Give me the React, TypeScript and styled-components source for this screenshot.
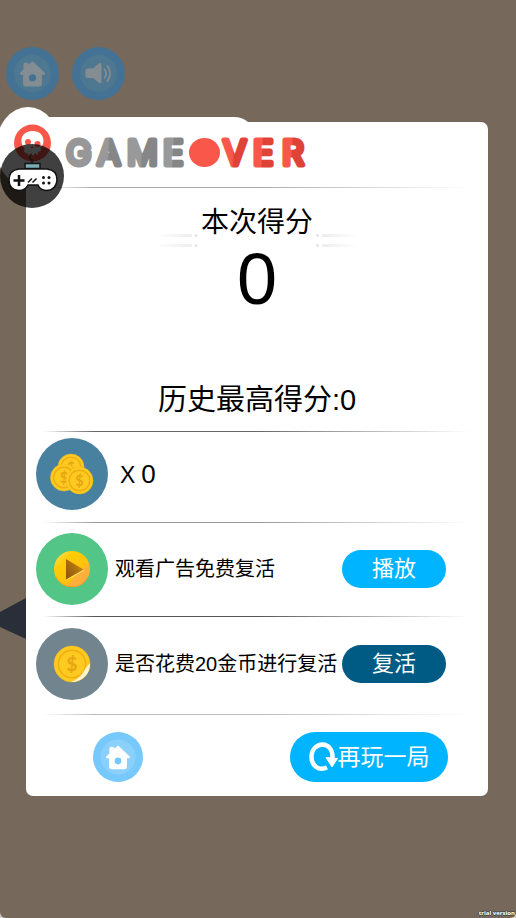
import React from 'react';
import styled, { createGlobalStyle } from 'styled-components';

const Global = createGlobalStyle`
  * { box-sizing: border-box; }
  html { background: #cfccc8; }
  body {
    margin: 0;
    font-family: "Liberation Sans", "Noto Sans CJK SC", sans-serif;
    color: #000;
  }
  button { font: inherit; border: 0; padding: 0; cursor: pointer; background: none; }
  svg { display: block; }
`;

const Page = styled.div`
  position: relative;
  min-height: 100vh;
  background: #76685a;
  border-radius: 0 0 6px 6px;
  overflow: hidden;
`;

const Toolbar = styled.nav`
  display: flex;
  gap: 13px;
  padding: 47px 6px 22px;
`;

const IconButton = styled.button<{ $size: number }>`
  width: ${(p) => p.$size}px;
  height: ${(p) => p.$size}px;
  border-radius: 50%;
  flex: none;
`;

const Card = styled.main`
  position: relative;
  margin: 0 28px 40px 26px;
  background: #fff;
  border-radius: 7px;
`;

const Crest = styled.svg`
  position: absolute;
  left: -26px;
  top: -15px;
`;

const FloatingPad = styled.button`
  position: absolute;
  left: -26px;
  top: 22px;
  width: 64px;
  height: 64px;
  border-radius: 50%;
`;

const Header = styled.header`
  height: 65px;
  padding: 2px 0 0 38px;
`;

const Wordmark = styled.h1`
  position: relative;
  margin: 0;
`;

const Divider = styled.hr<{ $tone: string }>`
  height: 1px;
  margin: 0 18px 0 17px;
  border: 0;
  background: linear-gradient(90deg, transparent, ${(p) => p.$tone} 12%, ${(p) => p.$tone} 50%, transparent);
`;

const Score = styled.section`
  display: flex;
  flex-direction: column;
  align-items: center;
  height: 243px;
  padding-top: 14px;
`;

const ScoreTitle = styled.div`
  display: flex;
  align-items: flex-end;
  gap: 3px;
  height: 45px;
`;

const Heading = styled.h2`
  margin: 0;
  align-self: flex-start;
  font-size: 28px;
  font-weight: 400;
  line-height: 42px;
`;

const BigNumber = styled.output`
  font-size: 72px;
  line-height: 64px;
`;

const Best = styled.p`
  margin: 69px 0 0;
  font-size: 29px;
  line-height: 40px;
`;

const Row = styled.section<{ $top: number; $bottom: number }>`
  display: flex;
  align-items: center;
  padding: ${(p) => `${p.$top}px 42px ${p.$bottom}px 10px`};
`;

const RowText = styled.p`
  flex: 1;
  margin: 0 0 0 7px;
  font-size: 20px;
  line-height: 32px;
  white-space: nowrap;
`;

const CoinCount = styled.p`
  display: flex;
  align-items: baseline;
  gap: 6px;
  margin: 0 0 0 12px;
  font-size: 26px;
  line-height: 30px;
`;

const Times = styled.span`
  font-size: 23px;
`;

const ActionButton = styled.button<{ $tone: string }>`
  flex: none;
  width: 104px;
  height: 38px;
  border-radius: 19px;
  background: ${(p) => p.$tone};
  color: #fff;
  font-size: 22px;
  line-height: 38px;
`;

const Footer = styled.footer`
  display: flex;
  justify-content: space-between;
  align-items: center;
  padding: 17px 40px 14px 67px;
`;

const AgainButton = styled.button`
  display: flex;
  align-items: center;
  justify-content: center;
  width: 158px;
  height: 50px;
  border-radius: 25px;
  background: #00b4ff;
  color: #fff;
  font-size: 23px;
  line-height: 48px;
`;

const Shard = styled.svg`
  position: absolute;
  left: 0;
  top: 598px;
`;

const Watermark = styled.small`
  position: absolute;
  right: 1px;
  bottom: 0;
  color: #fff;
  font: 700 6px/10px "Open Sans", sans-serif;
  text-shadow: 1px 0 #444, -1px 0 #444, 0 1px #444, 0 -1px #444;
`;

type Tones = { ring: string; core: string; glyph: string };
const dim: Tones = { ring: '#437294', core: '#4e7891', glyph: '#838d92' };
const bright: Tones = { ring: '#77c9fb', core: '#8bd0fb', glyph: '#fff' };

const HomeIcon = ({ size, tones }: { size: number; tones: Tones }) => (
  <svg width={size} height={size} viewBox="0 0 50 50" aria-hidden="true">
    <circle cx="25" cy="25" r="25" fill={tones.ring} />
    <circle cx="25" cy="25" r="17.5" fill={tones.core} />
    <path
      d="M25 14.2 36 24.6Q36.8 25.6 35.4 25.6H33.3V34.5Q33.3 36.7 31 36.7H19Q16.7 36.7 16.7 34.5V25.6H14.6Q13.2 25.6 14 24.6L17 21.7V16.2Q18.8 14.3 20.6 16.2V18.2Z"
      fill={tones.glyph}
      stroke={tones.glyph}
      strokeWidth="1.2"
      strokeLinejoin="round"
    />
    <circle cx="25" cy="29" r="3.4" fill={tones.ring} />
  </svg>
);

const SoundIcon = () => (
  <svg width="53" height="53" viewBox="0 0 53 53" aria-hidden="true">
    <circle cx="26.5" cy="26.5" r="26.5" fill={dim.ring} />
    <circle cx="26.5" cy="26.5" r="18.5" fill={dim.core} />
    <path d="M16 21.5H21L26.5 16.8Q29.5 14.8 29.5 18V34.5Q29.5 37.5 26.5 35.6L21 31H16Q13.5 31 13.5 28.5V24Q13.5 21.5 16 21.5Z" fill={dim.glyph} />
    <g fill="none" stroke={dim.glyph} strokeWidth="1.8" strokeLinecap="round">
      <path d="M32.5 22.3Q36 26.3 32.5 30.8" />
      <path d="M35.3 18.8Q41 26.3 35.3 34.2" />
    </g>
  </svg>
);

const GameLogo = () => (
  <svg width="260" height="62" viewBox="0 -10 260 62" role="img" aria-label="GAMEOVER">
    <defs>
      <linearGradient id="grey" x1="0" x2="1" y1="0" y2="0.1">
        <stop offset="0.5" stopColor="#999" />
        <stop offset="0.56" stopColor="#868686" />
      </linearGradient>
      <linearGradient id="red" x1="0" x2="1" y1="0" y2="0.1">
        <stop offset="0.46" stopColor="#f9574a" />
        <stop offset="0.52" stopColor="#df4337" />
      </linearGradient>
    </defs>
    <g fontFamily="Inter, sans-serif" fontWeight="400" fontSize="34" strokeWidth="5" strokeLinejoin="round">
      <text x="2" y="31" fill="#979797" stroke="#979797">G</text>
      <g fill="url(#grey)" stroke="url(#grey)">
        <text x="33" y="31">A</text>
        <text x="63" y="31">M</text>
        <text x="99" y="31">E</text>
      </g>
      <g fill="url(#red)" stroke="url(#red)">
        <text x="159" y="31">V</text>
        <text x="189" y="31">E</text>
        <text x="218" y="31">R</text>
      </g>
      <text x="127" y="31" fill="#f9574a">O</text>
    </g>
    <ellipse cx="140.500" cy="18.500" rx="15.500" ry="14.500" fill="#f9574a" />
  </svg>
);

const CrestArt = () => (
  <Crest width="252" height="84" viewBox="0 0 252 84" aria-hidden="true">
    <path d="M46 10H234Q242 10 248 15V40H46Z" fill="#fff" />
    <ellipse cx="28" cy="40" rx="32" ry="40" fill="#fff" />
    <circle cx="32.500" cy="36" r="18.500" fill="#f9574a" />
    <path d="M32.500 24C24.500 24 21 29 21.500 35C22 39 24 40 24.500 42L24 45L28 47V49L31 46L33 49L35 46L38 48V45L41 44L40.500 41C42 39 43.500 37 43.500 34C43.500 28 39.500 24 32.500 24Z" fill="#fff" />
    <circle cx="28" cy="35" r="3" fill="#f9574a" />
    <circle cx="37.500" cy="37" r="3" fill="#f9574a" />
    <path d="M32 39L30.500 41H34Z" fill="#f9574a" />
  </Crest>
);

const GamepadIcon = () => (
  <svg width="64" height="64" viewBox="0 0 64 64" aria-hidden="true">
    <circle cx="32" cy="32" r="32" fill="#000" fillOpacity="0.75" />
    <path d="M32 19V16Q27 14 31 11.500" fill="none" stroke="#151515" strokeWidth="1.500" />
    <rect x="25" y="19.500" width="15" height="5" fill="#7badb7" stroke="#151515" strokeWidth="1.500" />
    <path d="M19 25H47Q57 26 57 36Q56 46.500 46 46.500Q40 46 38 41H28Q25 46.500 19 46.500Q9 46 9 36Q9 26 19 25Z" fill="#fff" stroke="#111" strokeWidth="1.500" />
    <path d="M19 31V42M13.500 36.500H24.500" stroke="#111" strokeWidth="2.500" />
    <path d="M28 38.500L32 34.500M32.500 38.500L36.500 34.500" stroke="#111" strokeWidth="1.500" />
    <g fill="#111">
      <circle cx="43.500" cy="33.500" r="1.500" />
      <circle cx="49" cy="33.500" r="1.500" />
      <circle cx="43.500" cy="39" r="1.500" />
      <circle cx="49" cy="39" r="1.500" />
    </g>
  </svg>
);

const Coin = ({ x, y, r }: { x: number; y: number; r: number }) => (
  <g>
    <circle cx={x} cy={y} r={r} fill="#ffca1f" stroke="#f5b81c" strokeWidth="0.5" />
    <circle cx={x} cy={y} r={r * 0.76} fill="none" stroke="#eeae13" strokeWidth="1.4" />
    <text x={x} y={y + r * 0.38} textAnchor="middle" fontFamily="Lato, sans-serif" fontWeight="700" fontSize={r * 1.08} fill="#e6a512">$</text>
  </g>
);

const CoinsIcon = () => (
  <svg width="72" height="72" viewBox="0 0 72 72" aria-hidden="true">
    <circle cx="36" cy="36" r="36" fill="#47819f" />
    <Coin x={35} y={29} r={13} />
    <Coin x={28} y={39.5} r={13.5} />
    <Coin x={43.5} y={42.5} r={13.5} />
  </svg>
);

const PlayIcon = () => (
  <svg width="72" height="72" viewBox="0 0 72 72" aria-hidden="true">
    <defs>
      <linearGradient id="gold" x1="0" y1="0" x2="1" y2="1">
        <stop offset="0" stopColor="#ffe36a" />
        <stop offset="0.3" stopColor="#ffcb05" />
        <stop offset="0.62" stopColor="#ffc20e" />
        <stop offset="0.68" stopColor="#fdb03b" />
        <stop offset="1" stopColor="#fba93a" />
      </linearGradient>
      <linearGradient id="bronze" x1="0" y1="1" x2="1" y2="0.3">
        <stop offset="0" stopColor="#8a5208" />
        <stop offset="1" stopColor="#c98710" />
      </linearGradient>
    </defs>
    <circle cx="36" cy="36" r="36" fill="#53c587" />
    <circle cx="36" cy="36" r="18" fill="url(#gold)" />
    <path d="M20 44A18 18 0 0 0 52 44" fill="none" stroke="#f39c24" strokeWidth="1" />
    <path d="M30 47L48 37" stroke="#ffe58a" strokeWidth="1" />
    <path d="M30 26V46.500L47.500 36.500Z" fill="url(#bronze)" />
  </svg>
);

const CoinIcon = () => (
  <svg width="72" height="72" viewBox="0 0 72 72" aria-hidden="true">
    <circle cx="36" cy="36" r="36" fill="#72858f" />
    <Coin x={36} y={36} r={18} />
    <path d="M54 35A18 18 0 0 1 35 54Q41 52 46 46Q50 39 54 35Z" fill="#fff3d0" />
  </svg>
);

const ReplayIcon = () => (
  <svg width="29" height="30" viewBox="0 0 29 30" aria-hidden="true">
    <path d="M18 25.500C9 29.500 2.500 23 2.500 15C2.500 7 8 2.500 13.500 2.500C19.500 2.500 24 8 23.500 16" fill="none" stroke="#fff" strokeWidth="4.500" />
    <path d="M17 15.500L28.500 16.500L23 25Z" fill="#fff" stroke="#fff" strokeLinejoin="round" />
  </svg>
);

const Flank = ({ side }: { side: 'left' | 'right' }) => {
  const left = side === 'left';
  return (
    <svg width="42" height="14" viewBox="0 0 42 14" aria-hidden="true">
      <defs>
        <linearGradient id={`fade-${side}`} x1={left ? 0 : 1} x2={left ? 1 : 0}>
          <stop offset="0" stopColor="#ededed" stopOpacity="0" />
          <stop offset="1" stopColor="#ededed" />
        </linearGradient>
      </defs>
      {[1, 11].map((y) => (
        <g key={y}>
          <rect x={left ? 0 : 6} y={y} width="36" height="3" rx="1" fill={`url(#fade-${side})`} />
          <circle cx={left ? 40 : 1.5} cy={y + 1.5} r="1.5" fill="#e4e4e4" />
        </g>
      ))}
    </svg>
  );
};

export default function App() {
  return (
    <>
      <Global />
      <Page>
        <Shard width="26" height="41" viewBox="0 0 26 41" aria-hidden="true">
          <path d="M26 0V41L0 29V14Z" fill="#2a2e39" />
        </Shard>
        <Toolbar>
          <IconButton $size={53} aria-label="主页"><HomeIcon size={53} tones={dim} /></IconButton>
          <IconButton $size={53} aria-label="声音"><SoundIcon /></IconButton>
        </Toolbar>
        <Card>
          <CrestArt />
          <Header>
            <Wordmark><GameLogo /></Wordmark>
          </Header>
          <FloatingPad aria-label="游戏"><GamepadIcon /></FloatingPad>
          <Divider $tone="#aaa" />
          <Score>
            <ScoreTitle>
              <Flank side="left" />
              <Heading>本次得分</Heading>
              <Flank side="right" />
            </ScoreTitle>
            <BigNumber>0</BigNumber>
            <Best>历史最高得分:0</Best>
          </Score>
          <Divider $tone="#666" />
          <Row $top={6} $bottom={12}>
            <CoinsIcon />
            <CoinCount><Times>X</Times><span>0</span></CoinCount>
          </Row>
          <Divider $tone="#999" />
          <Row $top={10} $bottom={11}>
            <PlayIcon />
            <RowText>观看广告免费复活</RowText>
            <ActionButton $tone="#00b4ff">播放</ActionButton>
          </Row>
          <Divider $tone="#555" />
          <Row $top={11} $bottom={14}>
            <CoinIcon />
            <RowText>是否花费20金币进行复活</RowText>
            <ActionButton $tone="#005b84">复活</ActionButton>
          </Row>
          <Divider $tone="#bbb" />
          <Footer>
            <IconButton $size={50} aria-label="返回主页"><HomeIcon size={50} tones={bright} /></IconButton>
            <AgainButton><ReplayIcon />再玩一局</AgainButton>
          </Footer>
        </Card>
        <Watermark>trial version</Watermark>
      </Page>
    </>
  );
}
